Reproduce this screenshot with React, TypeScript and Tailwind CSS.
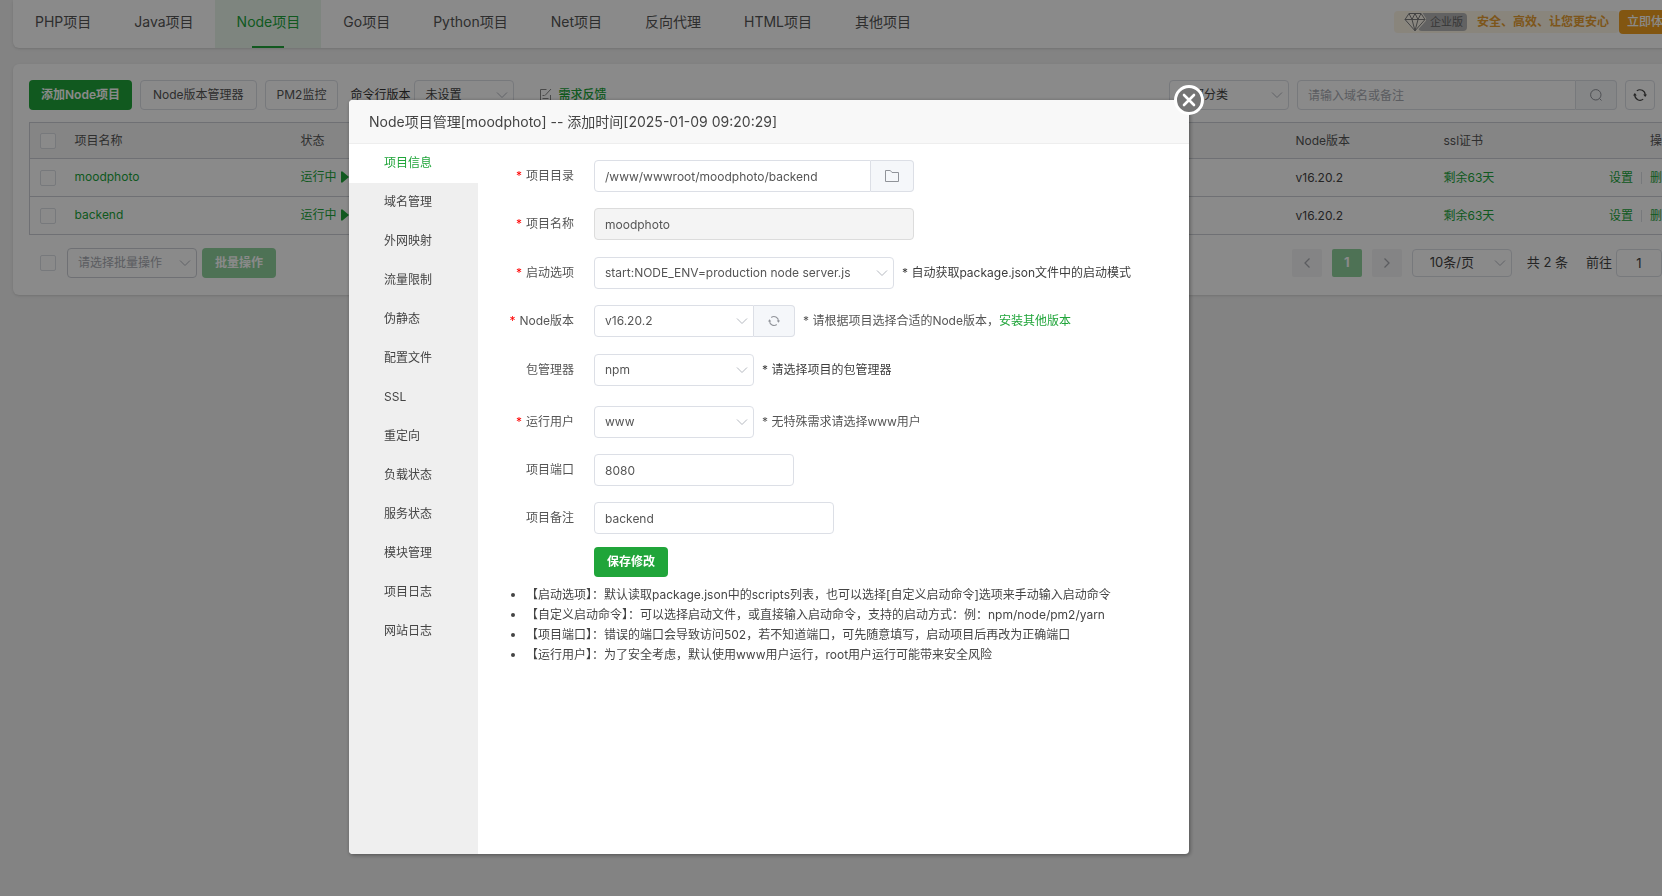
import { useState } from "react";
import type { ReactNode } from "react";

const tabs = [
  "PHP项目",
  "Java项目",
  "Node项目",
  "Go项目",
  "Python项目",
  "Net项目",
  "反向代理",
  "HTML项目",
  "其他项目",
];

const menus = [
  "项目信息",
  "域名管理",
  "外网映射",
  "流量限制",
  "伪静态",
  "配置文件",
  "SSL",
  "重定向",
  "负载状态",
  "服务状态",
  "模块管理",
  "项目日志",
  "网站日志",
];

const projects = [
  { name: "moodphoto", node: "v16.20.2", ssl: "剩余63天" },
  { name: "backend", node: "v16.20.2", ssl: "剩余63天" },
];

const tips = [
  "【启动选项】：默认读取package.json中的scripts列表，也可以选择[自定义启动命令]选项来手动输入启动命令",
  "【自定义启动命令】：可以选择启动文件，或直接输入启动命令，支持的启动方式：例：npm/node/pm2/yarn",
  "【项目端口】：错误的端口会导致访问502，若不知道端口，可先随意填写，启动项目后再改为正确端口",
  "【运行用户】：为了安全考虑，默认使用www用户运行，root用户运行可能带来安全风险",
];

const inputClass =
  "h-8 rounded-sm border border-[#dcdfe6] bg-white px-2.5 text-xs text-[#555] outline-none";

function Chevron({ className = "" }: { className?: string }) {
  return (
    <svg
      className={`pointer-events-none absolute top-1/2 -translate-y-1/2 w-3 h-3 ${className}`}
      viewBox="0 0 12 12"
      fill="none"
      stroke="#b4b8bf"
    >
      <path d="M1 3.5l5 5 5-5" />
    </svg>
  );
}

function RefreshIcon({ className = "" }: { className?: string }) {
  return (
    <svg className={className} viewBox="0 0 14 14" fill="none" stroke="currentColor" strokeWidth={1.2}>
      <path d="M3.8 2.9A5.2 5.2 0 0 1 12.2 7" />
      <path d="M10.2 11.1A5.2 5.2 0 0 1 1.8 7" />
      <path d="M10.2 6.4h3.8l-1.8 2.5z" fill="currentColor" stroke="none" />
      <path d="M3.8 7.6H0l1.8-2.5z" fill="currentColor" stroke="none" />
    </svg>
  );
}

function Select({
  id,
  label,
  value,
  className,
  selectClass = "h-8 border-[#dcdfe6] text-[#555] pl-2.5",
  disabled,
}: {
  id: string;
  label?: string;
  value: string;
  className: string;
  selectClass?: string;
  disabled?: boolean;
}) {
  return (
    <div className={`relative ${className}`}>
      <select
        id={id}
        aria-label={label}
        disabled={disabled}
        className={`w-full appearance-none border bg-white text-xs outline-none opacity-100 rounded-[inherit] ${selectClass}`}
      >
        <option>{value}</option>
      </select>
      <Chevron className="right-1.5" />
    </div>
  );
}

function FormRow({
  id,
  label,
  required,
  className = "mb-4",
  children,
}: {
  id: string;
  label: string;
  required?: boolean;
  className?: string;
  children: ReactNode;
}) {
  return (
    <div className={`flex items-center ${className}`}>
      <label htmlFor={id} className="w-24 mr-5 text-right text-[#555] shrink-0">
        {required && <span className="text-[#f00] mr-1">*</span>}
        {label}
      </label>
      {children}
    </div>
  );
}

function Diamond() {
  return (
    <svg className="w-[22px] h-5" viewBox="0 0 22 20" fill="none" stroke="#7d7d7d" strokeLinejoin="round">
      <path d="M5 1.5h12l4 6L11 18.8 1 7.5z" fill="#fdf8ec" stroke="#fdf8ec" strokeWidth={3} />
      <path d="M5 1.5h12l4 6L11 18.8 1 7.5z" />
      <path d="M1 7.5h20M5 1.5l3 6 3 11.3 3-11.3 3-6M8 7.5l3-6 3 6" />
    </svg>
  );
}

function ProjectPage() {
  return (
    <div className="pl-[13px] -mr-[39px]">
      <nav className="h-12 flex items-center bg-white rounded-b-md shadow-sm text-sm">
        {tabs.map((tab) => {
          const active = tab === "Node项目";
          return (
            <a
              key={tab}
              href="#"
              className={`relative h-12 pl-[22px] pr-[21px] pb-1 flex items-center ${active ? "text-[#20a53a] bg-[#e9f6eb]" : "text-[#555]"}`}
            >
              {tab}
              {active && <span className="absolute bottom-0 left-1/2 -translate-x-1/2 w-8 h-0.5 bg-[#20a53a]" />}
            </a>
          );
        })}
        <div className="ml-auto mr-[18px] mb-1 flex items-center text-xs">
          <div className="h-[22px] px-2.5 flex items-center bg-[#fdf6e6] rounded-sm">
            <div className="relative z-10">
              <Diamond />
            </div>
            <span className="h-[18px] -ml-2 pl-3 pr-1 flex items-center rounded-sm bg-[#b5b5b5] text-[11px] text-[#666]">
              企业版
            </span>
            <b className="ml-2.5 text-[#e8a032]">安全、高效、让您更安心</b>
          </div>
          <button className="h-6 px-2 rounded-sm bg-[#f0a020] font-medium text-white">立即体验</button>
        </div>
      </nav>

      <section className="mt-4 p-4 bg-white rounded-md shadow-sm text-xs text-[#444]">
        <div className="flex items-center">
          <button className="h-[30px] px-3 rounded-sm bg-[#20a53a] text-white font-semibold">添加Node项目</button>
          <button className="h-[30px] ml-2 px-3 rounded-sm border border-[#dcdfe6] text-[#555]">Node版本管理器</button>
          <button className="h-[30px] ml-2 px-[11px] rounded-sm border border-[#dcdfe6] text-[#555]">PM2监控</button>
          <label htmlFor="cli" className="ml-3 mr-1 text-[#333]">命令行版本</label>
          <Select
            id="cli"
            value="未设置"
            className="w-[100px] rounded-sm"
            selectClass="h-[30px] border-[#dcdfe6] text-[#444] pl-2.5"
          />
          <a href="#" className="ml-[26px] flex items-center gap-1.5 text-[#20a53a] font-medium">
            <svg className="w-3 h-3.5 text-[#888]" viewBox="0 0 12 14" fill="none" stroke="currentColor">
              <path d="M6.5 1.5h-6v12h10V7" />
              <path d="M5 7.5l6-6.5M2.5 7.5h2M2.5 10.5h6" />
            </svg>
            需求反馈
          </a>
          <div className="ml-auto pr-[30px] flex gap-2">
            <Select
              id="category"
              label="分类"
              value="全部分类"
              className="w-[120px] rounded-sm"
              selectClass="h-[30px] border-[#dcdfe6] text-[#444] pl-2.5"
            />
            <div className="flex w-80">
              <input
                aria-label="搜索"
                placeholder="请输入域名或备注"
                className="flex-1 min-w-0 h-[30px] px-2.5 border border-[#dcdfe6] rounded-l-sm outline-none placeholder:text-[#a8abb2]"
              />
              <button aria-label="搜索" className="w-[41px] flex items-center justify-center border border-l-0 border-[#dcdfe6] rounded-r-sm bg-[#f5f7fa]">
                <svg className="w-3.5 h-3.5" viewBox="0 0 14 14" fill="none" stroke="#909399">
                  <circle cx="6.8" cy="6.8" r="5.2" />
                  <path d="M10.5 10.5l2 2" />
                </svg>
              </button>
            </div>
            <button aria-label="刷新" className="w-[30px] h-[30px] flex items-center justify-center border border-[#dcdfe6] rounded-sm text-[#444]">
              <RefreshIcon className="w-3.5 h-3.5" />
            </button>
          </div>
        </div>

        <table className="w-full mt-3 table-fixed border-collapse border border-[#cdd0d6]">
          <colgroup>
            <col className="w-[35px]" />
            <col className="w-[226px]" />
            <col />
            <col className="w-[148px]" />
            <col className="w-[251px]" />
          </colgroup>
          <thead>
            <tr className="h-9 bg-[#f6f6f6] border-b border-[#cdd0d6] text-left text-[#555]">
              <th className="pl-2.5">
                <input type="checkbox" aria-label="全选" className="block w-4 h-4 appearance-none border border-[#dcdfe6] rounded-xs bg-white" />
              </th>
              <th className="px-2.5 font-normal">项目名称</th>
              <th className="px-2.5 font-normal">状态</th>
              <th className="px-2.5 font-normal">Node版本</th>
              <th className="px-2.5 font-normal">
                <div className="flex justify-between">
                  <span>ssl证书</span>
                  <span>操作</span>
                </div>
              </th>
            </tr>
          </thead>
          <tbody>
            {projects.map((project) => (
              <tr key={project.name} className="h-[38px] border-b border-[#cdd0d6]">
                <td className="pl-2.5">
                  <input type="checkbox" aria-label={project.name} className="block w-4 h-4 appearance-none border border-[#dcdfe6] rounded-xs bg-white" />
                </td>
                <td className="px-2.5 pb-0.5">
                  <a href="#" className="text-[#20a53a]">{project.name}</a>
                </td>
                <td className="px-2.5 pb-0.5">
                  <a href="#" className="flex items-center gap-1 text-[#20a53a]">
                    运行中
                    <svg className="w-2 h-3" viewBox="0 0 8 12" fill="currentColor">
                      <path d="M0 0.5v11h1.5L8 6 1.5 0.5z" />
                    </svg>
                  </a>
                </td>
                <td className="px-2.5">{project.node}</td>
                <td className="px-2.5">
                  <div className="flex items-center text-[#20a53a]">
                    <a href="#" className="mr-auto">{project.ssl}</a>
                    <a href="#">设置</a>
                    <span className="mx-2 w-px h-3 bg-[#dcdfe6]" />
                    <a href="#">删除</a>
                  </div>
                </td>
              </tr>
            ))}
          </tbody>
        </table>

        <div className="mt-[13px] pb-px pl-[11px] flex items-center">
          <input type="checkbox" aria-label="全选" className="w-4 h-4 appearance-none border border-[#dcdfe6] rounded-xs bg-white" />
          <Select
            id="batch"
            label="批量操作"
            value="请选择批量操作"
            disabled
            className="ml-[11px] w-[130px] rounded-sm"
            selectClass="h-[30px] border-[#cdd0d6] bg-[#f5f5f5] text-[#a8abb2] pl-2.5"
          />
          <button disabled className="ml-[5px] h-[30px] px-[13px] rounded-sm bg-[#90d29d] text-white font-semibold">批量操作</button>
          <div className="ml-auto mr-1.5 flex items-center text-[13px]">
            <button aria-label="上一页" disabled className="w-[30px] h-7 mr-2.5 flex items-center justify-center rounded-xs bg-[#f4f4f5]">
              <svg className="w-2 h-2.5" viewBox="0 0 8 10" fill="none" stroke="#a8abb2" strokeWidth={1.3}>
                <path d="M6.5 0.5L2 5l4.5 4.5" />
              </svg>
            </button>
            <button className="w-[30px] h-7 mr-2.5 rounded-xs bg-[#90d29d] text-white font-bold">1</button>
            <button aria-label="下一页" disabled className="w-[30px] h-7 mr-2.5 flex items-center justify-center rounded-xs bg-[#f4f4f5]">
              <svg className="w-2 h-2.5" viewBox="0 0 8 10" fill="none" stroke="#a8abb2" strokeWidth={1.3}>
                <path d="M1.5 0.5L6 5 1.5 9.5" />
              </svg>
            </button>
            <Select
              id="page-size"
              label="每页条数"
              value="10条/页"
              className="w-[100px] rounded-sm"
              selectClass="h-7 border-[#dcdfe6] text-[13px] text-[#444] pl-[17px]"
            />
            <span className="ml-[15px]">共 2 条</span>
            <label htmlFor="goto" className="ml-[18px] mr-1">前往</label>
            <input id="goto" defaultValue="1" className="w-[46px] h-7 text-center border border-[#dcdfe6] rounded-sm outline-none" />
            <span className="ml-1">页</span>
          </div>
        </div>
      </section>
    </div>
  );
}

function ProjectForm() {
  return (
    <div className="flex-1 pt-4 text-xs text-[#555]">
      <FormRow id="path" label="项目目录" required>
        <input id="path" defaultValue="/www/wwwroot/moodphoto/backend" className={`${inputClass} w-[277px] rounded-r-none`} />
        <button aria-label="选择目录" className="w-[43px] h-8 flex items-center justify-center border border-l-0 border-[#dcdfe6] rounded-r-sm bg-[#f5f7fa]">
          <svg className="w-3.5 h-3" viewBox="0 0 14 12" fill="none" stroke="#909399">
            <path d="M0.5 0.5h4.8l1.7 2h6.5v9h-13z" />
          </svg>
        </button>
      </FormRow>
      <FormRow id="name" label="项目名称" required className="mb-[17px]">
        <input id="name" defaultValue="moodphoto" disabled className="w-80 h-8 px-2.5 rounded-sm border border-[#dcdcdc] bg-[#f4f4f4] text-[#555]" />
      </FormRow>
      <FormRow id="script" label="启动选项" required>
        <Select id="script" value="start:NODE_ENV=production node server.js" className="w-[300px] rounded-sm" />
        <span className="ml-2 text-[#3c3c3c]">* 自动获取package.json文件中的启动模式</span>
      </FormRow>
      <FormRow id="version" label="Node版本" required className="mb-[17px]">
        <Select id="version" value="v16.20.2" className="w-40 rounded-l-sm" />
        <button aria-label="刷新版本" className="w-[41px] h-8 flex items-center justify-center border border-l-0 border-[#dcdfe6] rounded-r-sm bg-[#f5f7fa] text-[#909399]">
          <RefreshIcon className="w-3 h-3" />
        </button>
        <span className="ml-2">
          * 请根据项目选择合适的Node版本，
          <a href="#" className="text-[#20a53a]">安装其他版本</a>
        </span>
      </FormRow>
      <FormRow id="manager" label="包管理器" className="mb-5">
        <Select id="manager" value="npm" className="w-40 rounded-sm" />
        <span className="ml-2 text-[#3c3c3c]">* 请选择项目的包管理器</span>
      </FormRow>
      <FormRow id="user" label="运行用户" required>
        <Select id="user" value="www" className="w-40 rounded-sm" />
        <span className="ml-2">* 无特殊需求请选择www用户</span>
      </FormRow>
      <FormRow id="port" label="项目端口">
        <input id="port" defaultValue="8080" className={`${inputClass} w-[200px]`} />
      </FormRow>
      <FormRow id="remark" label="项目备注" className="mb-[13px]">
        <input id="remark" defaultValue="backend" className={`${inputClass} w-60`} />
      </FormRow>
      <button className="block ml-[116px] h-[30px] px-[13px] rounded-sm bg-[#20a53a] text-white font-bold">保存修改</button>
      <ul className="mt-2 pl-12 list-disc leading-5 text-[#444]">
        {tips.map((tip) => (
          <li key={tip}>{tip}</li>
        ))}
      </ul>
    </div>
  );
}

export default function App() {
  const [menu, setMenu] = useState("项目信息");

  return (
    <div className="min-h-screen overflow-hidden bg-[#f2f2f2] font-[Inter,'Noto_Sans_CJK_SC',sans-serif]">
      <ProjectPage />

      {/* Modal */}
      <div className="fixed inset-0 z-20 flex bg-black/46 pt-[100px] pb-[42px] pl-[349px]">
        <div role="dialog" aria-labelledby="dialog-title" className="relative w-[840px] flex flex-col rounded bg-white shadow-[1px_1px_4px_rgba(0,0,0,0.4)]">
          <h2 id="dialog-title" className="h-11 px-5 flex items-center rounded-t border-b border-[#eee] bg-[#f8f8f8] text-sm text-[#444]">
            Node项目管理[moodphoto] -- 添加时间[2025-01-09 09:20:29]
          </h2>
          <button
            aria-label="关闭"
            className="absolute -top-[15px] -right-[15px] w-[30px] h-[30px] flex items-center justify-center rounded-full border-[3px] border-white bg-[#757575]"
          >
            <svg className="w-3.5 h-3.5" viewBox="0 0 14 14" stroke="#fff" strokeWidth={2.6} strokeLinecap="round">
              <path d="M2 2l10 10M12 2L2 12" />
            </svg>
          </button>
          <div className="flex-1 flex">
            <div className="w-[129px] shrink-0 flex flex-col bg-[#efefef] rounded-bl text-xs">
              {menus.map((item) => (
                <button
                  key={item}
                  onClick={() => setMenu(item)}
                  className={`h-[39px] pl-[35px] pb-0.5 text-left ${item === menu ? "bg-white text-[#20a53a]" : "text-[#444]"}`}
                >
                  {item}
                </button>
              ))}
            </div>
            <ProjectForm />
          </div>
        </div>
      </div>
    </div>
  );
}
